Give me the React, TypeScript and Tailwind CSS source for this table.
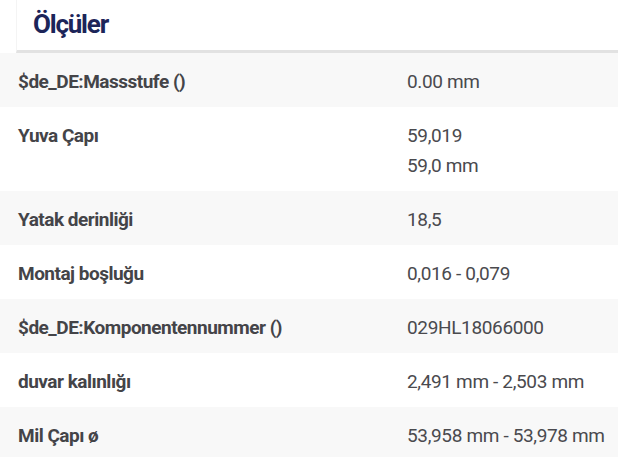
const rows: { label: string; values: string[] }[] = [
  { label: "$de_DE:Massstufe ()", values: ["0.00 mm"] },
  { label: "Yuva Çapı", values: ["59,019", "59,0 mm"] },
  { label: "Yatak derinliği", values: ["18,5"] },
  { label: "Montaj boşluğu", values: ["0,016 - 0,079"] },
  { label: "$de_DE:Komponentennummer ()", values: ["029HL18066000"] },
  { label: "duvar kalınlığı", values: ["2,491 mm - 2,503 mm"] },
  { label: "Mil Çapı ø", values: ["53,958 mm - 53,978 mm"] },
];

export default function App() {
  return (
    <div className="w-[618px] h-[457px] overflow-hidden bg-white font-['Roboto',sans-serif]">
      <div className="pl-4">
        <div className="h-[53px] border-l border-[#f4f4f4] border-b-[3px] border-b-[#e2e2e2] pl-4 pt-[7px]">
          <h2 className="text-[26px] leading-[34px] font-bold text-[#1c2559] tracking-[-1.2px]">
            Ölçüler
          </h2>
        </div>
      </div>
      <div>
        {rows.map((r, i) => (
          <div
            key={r.label}
            className={`flex pt-[14px] pb-[10px] ${i % 2 === 0 ? "bg-[#f8f8f8]" : "bg-white"}`}
          >
            <div className="w-[407px] pl-[18px] text-[19px] leading-[30px] font-bold text-[#444448] tracking-[-0.5px]">
              {r.label}
            </div>
            <div className="flex-1 text-[19px] leading-[30px] text-[#4a4a4e] tracking-[-0.35px]">
              {r.values.map((v) => (
                <div key={v}>{v}</div>
              ))}
            </div>
          </div>
        ))}
      </div>
    </div>
  );
}
